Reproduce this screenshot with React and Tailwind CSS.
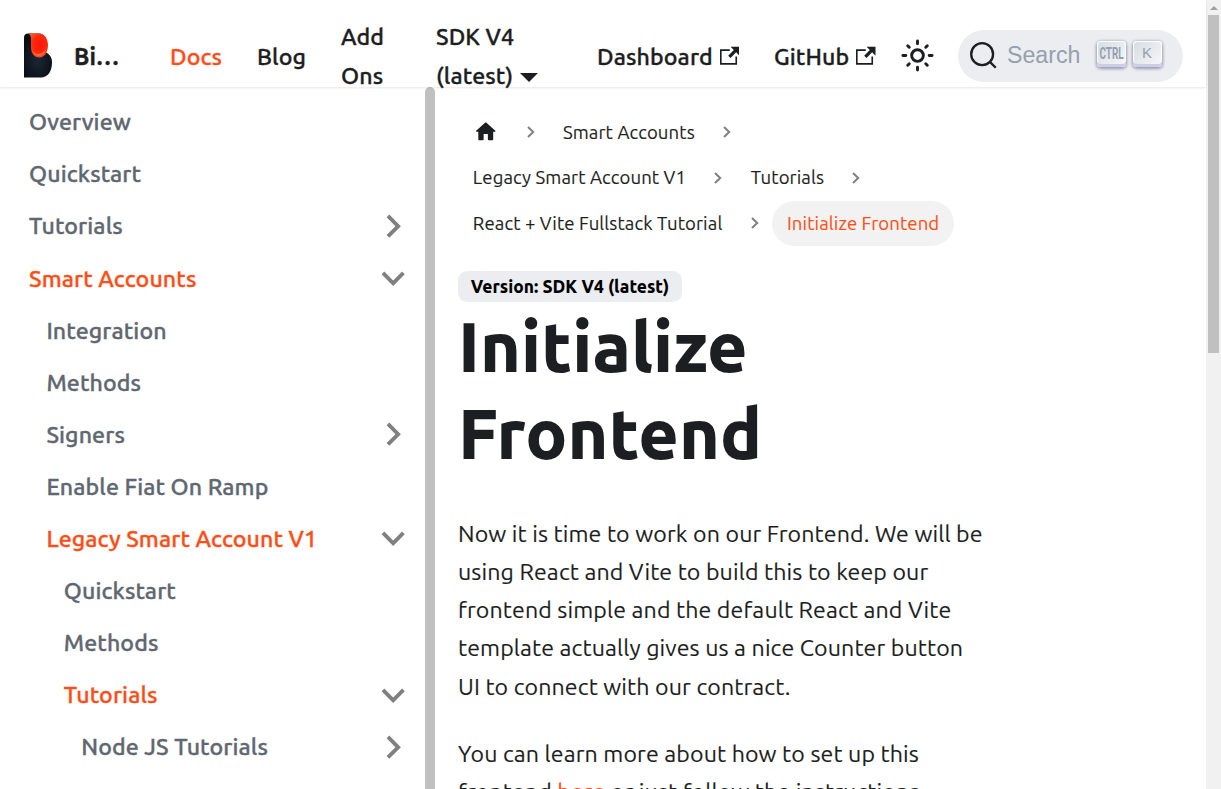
import clsx from "clsx";

const menu = [
  { label: "Overview", level: 0 },
  { label: "Quickstart", level: 0 },
  { label: "Tutorials", level: 0, caret: "closed" },
  { label: "Smart Accounts", level: 0, caret: "open", active: true },
  { label: "Integration", level: 1 },
  { label: "Methods", level: 1 },
  { label: "Signers", level: 1, caret: "closed" },
  { label: "Enable Fiat On Ramp", level: 1 },
  { label: "Legacy Smart Account V1", level: 1, caret: "open", active: true },
  { label: "Quickstart", level: 2 },
  { label: "Methods", level: 2 },
  { label: "Tutorials", level: 2, caret: "open", active: true },
  { label: "Node JS Tutorials", level: 3, caret: "closed" },
];

const indent = ["pl-[29px]", "pl-[46.4px]", "pl-[63.8px]", "pl-[81.2px]"];

function Logo() {
  return (
    <svg className="h-[46px] w-[32px] shrink-0" viewBox="0 0 32 46">
      <defs>
        <radialGradient id="body" cx="0.5" cy="0.6" r="0.6">
          <stop offset="0" stopColor="#1b2735" />
          <stop offset="1" stopColor="#0a0c14" />
        </radialGradient>
        <radialGradient id="flame" cx="0.6" cy="0.45" r="0.6">
          <stop offset="0" stopColor="#ff1408" />
          <stop offset="0.6" stopColor="#fb2a0c" />
          <stop offset="1" stopColor="#ff5a30" />
        </radialGradient>
      </defs>
      <path d="M1 5C1 2 2 .5 5 .5h11c5 0 7 4 7 10v9c4 2 6 5 6 10C29 38 25 44.500 18 44.500H1z" fill="url(#body)" />
      <path d="M5 .5h11c5.500 0 9 5 9 11.500C25 19 21.500 24.500 16.500 24.500S8 20.500 8 14V6C8 3 7 1.200 5 .5z" fill="url(#flame)" />
      <path d="M9 17c2.500 5 9.500 6 14-1-1 4.500-3.500 7-6.500 7s-6.200-2-7.500-6z" fill="#ff6340" />
    </svg>
  );
}

function External() {
  return (
    <svg className="ml-[7px] size-[19.500px] shrink-0" viewBox="0 0 24 24" fill="currentColor">
      <path d="M21 13v10h-21v-19h12v2h-10v15h17v-8h2zm3-12h-10.988l4.035 4-6.977 7.070 2.828 2.828 6.977-7.070 4.125 4.172v-11z" />
    </svg>
  );
}

function Sun() {
  return (
    <svg className="size-[35px]" viewBox="0 0 24 24" fill="none" stroke="currentColor" strokeWidth="2" strokeLinecap="round">
      <circle cx="12" cy="12" r="4" />
      <path d="M2 12h2M20 12h2M12 2v2M12 20v2M5.290 5.290l1.060 1.060M17.650 17.650l1.060 1.060M18.710 5.290l-1.060 1.060M6.350 17.650l-1.060 1.060" />
    </svg>
  );
}

function Key({ children }) {
  return (
    <span className="flex h-[26px] w-[29px] items-center justify-center rounded-[4px] bg-linear-[-225deg] from-[#d5dbe4] to-[#f8f8f8] pb-[2px] text-[#969faf] shadow-[inset_0_-3px_0_0_#cdcde6,inset_0_0_1px_1px_#fff,0_1px_3px_1px_rgba(30,35,90,0.4)]">
      {children}
    </span>
  );
}

function Navbar() {
  return (
    <nav className="z-10 flex h-[87px] shrink-0 items-center bg-white pt-[24px] pl-[23px] text-[23.17px] leading-[38.23px] font-medium tracking-[0.1px] shadow-[0_1px_2px_0_rgba(0,0,0,0.1)] [-webkit-text-stroke:0.35px]">
      <Logo />
      <span className="ml-[19px] w-[80px] pt-[1.500px] font-bold">Bi…</span>
      <span className="w-[87px] pl-[16px] pt-[1.500px] text-[#ff4e17]">Docs</span>
      <span className="w-[84px] pl-[16px] pt-[1.500px]">Blog</span>
      <span className="w-[94px] pl-[16px]"><span className="block pb-[0.700px]">Add</span><span className="block">Ons</span></span>
      <span className="w-[162px] pl-[17px]">
        <span className="block pb-[0.700px]">SDK V4</span>
        <span className="flex items-center">
          (latest)
          <span className="mt-[5px] ml-[7px] border-x-[9.300px] border-t-[9.300px] border-x-transparent border-t-[#1c1e21]" />
        </span>
      </span>
      <span className="flex w-[177px] items-center pl-[16px]"><span className="pt-[1.500px]">Dashboard</span><External /></span>
      <span className="flex w-[142px] items-center pl-[16px]"><span className="pt-[1.500px]">GitHub</span><External /></span>
      <span className="mr-[23px]"><Sun /></span>
      <button className="flex h-[52px] w-[225px] items-center rounded-full bg-[#ebedf0] pl-[11px] tracking-normal [-webkit-text-stroke:0px]">
        <svg className="size-[29px] shrink-0" viewBox="0 0 20 20" fill="none" stroke="#1c1e21" strokeWidth="1.600" strokeLinecap="round">
          <path d="M14.386 14.386l4.0877 4.0877-4.0877-4.0877c-2.9418 2.9419-7.7115 2.9419-10.6533 0-2.9419-2.9418-2.9419-7.7115 0-10.6533 2.9418-2.9419 7.7115-2.9419 10.6533 0 2.9419 2.9418 2.9419 7.7115 0 10.6533z" />
        </svg>
        <span className="ml-[9px] w-[90px] text-left font-['Liberation_Sans',sans-serif] text-[23.17px] font-normal text-[#969faf]">Search</span>
        <span className="-mt-[3px] flex gap-[6.500px]">
          <Key><span className="scale-x-[0.62] pt-[2px] font-[Roboto,sans-serif] text-[16px] font-bold">CTRL</span></Key>
          <Key><span className="font-['Liberation_Sans',sans-serif] text-[15px] font-normal">K</span></Key>
        </span>
      </button>
    </nav>
  );
}

function Sidebar() {
  return (
    <aside className="flex w-[435px] shrink-0">
      <ul className="flex w-[425px] flex-col gap-[5.790px] overflow-hidden pt-[11.400px] text-[23.17px] font-medium tracking-[0.09px] [-webkit-text-stroke:0.35px]">
        {menu.map((m, i) => (
          <li key={i} className={clsx("flex h-[46.340px] shrink-0 items-center justify-between pr-[8.400px]", indent[m.level], m.active ? "text-[#ff4e17]" : "text-[#606770]")}>
            <span>{m.label}</span>
            {m.caret && (
              <svg className={clsx("size-[46.340px]", m.caret === "open" ? "rotate-180" : "rotate-90")} viewBox="0 0 24 24" fill="#808080">
                <path d="M7.410 15.410L12 10.830l4.590 4.580L18 14l-6-6-6 6z" />
              </svg>
            )}
          </li>
        ))}
      </ul>
      <div className="w-[10px] rounded-t-[5px] bg-[#c0c0c0]" />
    </aside>
  );
}

function Sep() {
  return (
    <span className="flex w-[35px] items-center justify-center">
      <svg className="h-[12px] w-[8px]" viewBox="0 0 8 12" fill="none" stroke="#808080" strokeWidth="2">
        <path d="M1 1l5.200 5L1 11" />
      </svg>
    </span>
  );
}

function Crumb({ children, active }) {
  return <span className={clsx("flex h-[45.500px] items-center rounded-full px-[14.800px]", active && "bg-[#f2f2f2] text-[#ff4e17]")}>{children}</span>;
}

function Article() {
  return (
    <main className="min-w-0 flex-1 overflow-hidden pl-[23px] pt-[22.700px]">
      <div className="flex flex-col text-[18.540px] tracking-[0.12px] [-webkit-text-stroke:0.12px]">
        <div className="flex">
          <Crumb>
            <svg className="-mt-[2px] size-[25.500px]" viewBox="0 0 24 24" fill="currentColor">
              <path d="M10 19v-5h4v5c0 .55.45 1 1 1h3c.55 0 1-.45 1-1v-7h1.700c.46 0 .68-.57.33-.87L12.670 3.600c-.38-.34-.96-.34-1.340 0l-8.360 7.530c-.34.3-.13.87.33.87H5v7c0 .55.45 1 1 1h3c.55 0 1-.45 1-1z" />
            </svg>
          </Crumb>
          <Sep /><Crumb>Smart Accounts</Crumb><Sep />
        </div>
        <div className="flex"><Crumb>Legacy Smart Account V1</Crumb><Sep /><Crumb>Tutorials</Crumb><Sep /></div>
        <div className="flex"><Crumb>React + Vite Fullstack Tutorial</Crumb><Sep /><Crumb active>Initialize Frontend</Crumb></div>
      </div>
      <span className="mt-[25px] flex h-[31px] w-[224px] items-center justify-center rounded-[9.300px] bg-[#ebedf0] text-[17.380px] font-extrabold whitespace-nowrap text-black">Version: SDK V4 (latest)</span>
      <h1 className="mt-[1px] text-[69.510px] leading-[86.890px] font-extrabold tracking-[0.1px]">Initialize<br />Frontend</h1>
      <div className="mt-[36.800px] text-[23.17px] leading-[38.23px] tracking-[0.12px] whitespace-nowrap [-webkit-text-stroke:0.12px]">
        <p>
          Now it is time to work on our Frontend. We will be<br />
          using React and Vite to build this to keep our<br />
          frontend simple and the default React and Vite<br />
          template actually gives us a nice Counter button<br />
          UI to connect with our contract.
        </p>
        <p className="mt-[29px]">
          You can learn more about how to set up this<br />
          frontend <span className="text-[#ff4e17]">here</span> or just follow the instructions
        </p>
      </div>
    </main>
  );
}

export default function App() {
  return (
    <div className="flex h-screen w-full overflow-hidden bg-white font-[Ubuntu,'Noto_Sans',sans-serif] text-[#1c1e21]">
      <div className="flex min-w-0 flex-1 flex-col">
        <Navbar />
        <div className="flex min-h-0 flex-1"><Sidebar /><Article /></div>
      </div>
      <div className="flex w-[15px] shrink-0 flex-col items-center bg-[#f1f1f1]">
        <div className="flex h-[15px] items-center"><span className="border-x-[4px] border-b-[4px] border-x-transparent border-b-[#a0a0a0]" /></div>
        <div className="h-[338px] w-[11px] bg-[#c0c0c0]" />
      </div>
    </div>
  );
}
